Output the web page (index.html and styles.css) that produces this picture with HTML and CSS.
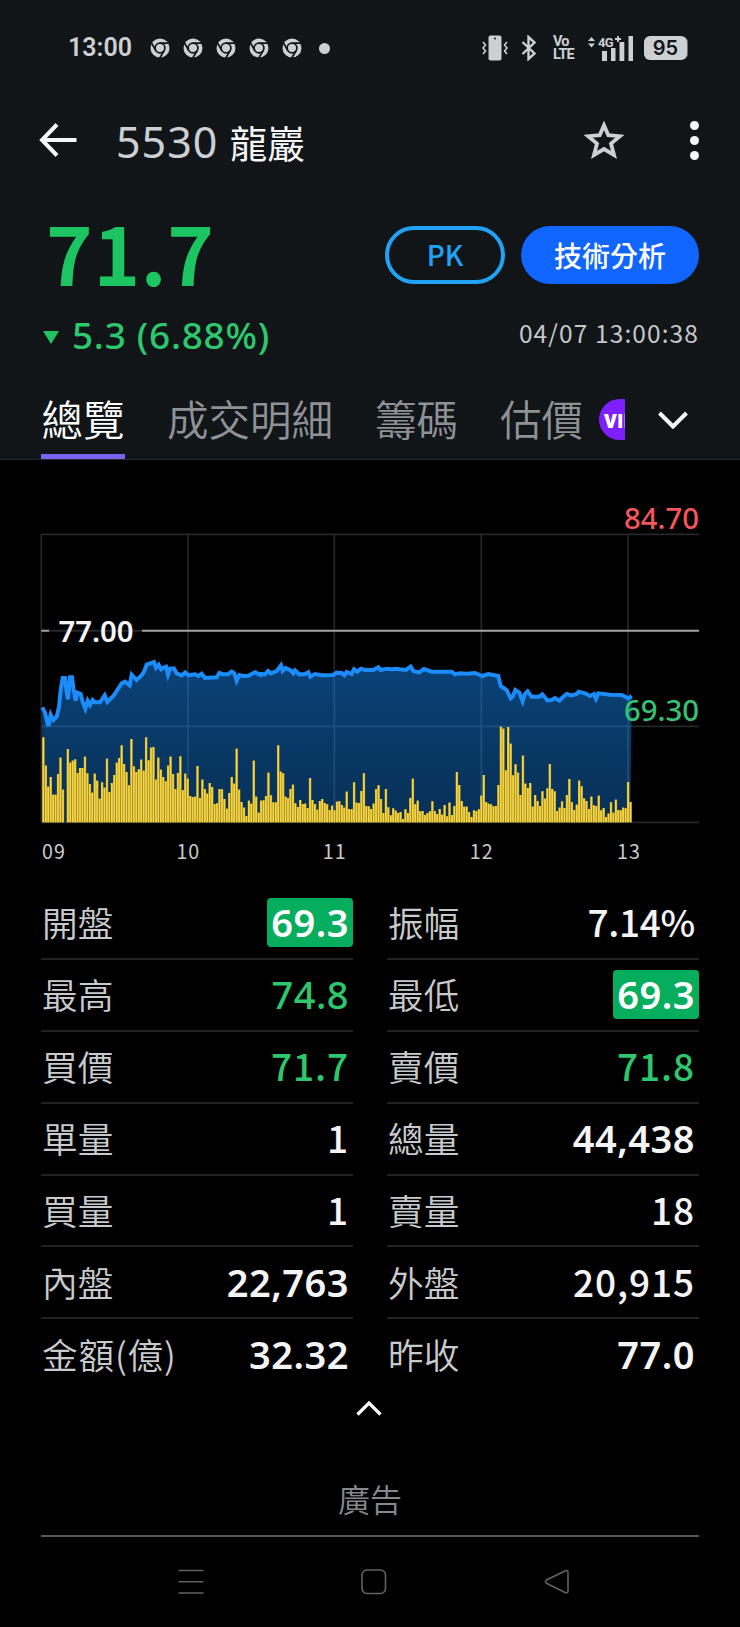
FILE: index.html
```html
<!DOCTYPE html>
<html lang="zh-Hant">
<head>
	<meta charset="utf-8">
	<title>5530 龍巖</title>
	<link rel="stylesheet" href="styles.css">
</head>
<body>
<svg class="defs">
	<symbol id="chrome" viewBox="0 0 20 20">
		<circle cx="10" cy="10" r="9.5" fill="#ccd0d2"/>
		<circle cx="10" cy="10" r="4.9" fill="none" stroke="#111518" stroke-width="1.7"/>
		<path d="M10 5.1H19M5.8 12.5L1.3 4.7M14.2 12.5L9.7 20.2" stroke="#111518" stroke-width="1.7"/>
	</symbol>
</svg>

<div class="top">
	<div class="status">
		<span class="clock">13:00</span>
		<div class="notis">
			<svg><use href="#chrome"/></svg>
			<svg><use href="#chrome"/></svg>
			<svg><use href="#chrome"/></svg>
			<svg><use href="#chrome"/></svg>
			<svg><use href="#chrome"/></svg>
			<i class="dot"></i>
		</div>
		<svg class="vibrate" width="26" height="26" viewBox="0 0 26 26">
			<rect x="6.5" y="0.5" width="13" height="25" rx="2" fill="#ccd0d2"/>
			<circle cx="13" cy="3.4" r="1" fill="#111518"/>
			<path d="M1 7l2.5 3-2.5 3 2.5 3-2.5 3M25 7l-2.5 3 2.5 3-2.5 3 2.5 3" fill="none" stroke="#ccd0d2" stroke-width="1.6"/>
		</svg>
		<svg class="bt" width="16" height="26" viewBox="0 0 16 26">
			<path d="M1.5 7L13.5 18.5 7.5 24V2L13.5 7.5 1.5 19" fill="none" stroke="#ccd0d2" stroke-width="2.4"/>
		</svg>
		<div class="volte"><span>Vo</span><span>LTE</span></div>
		<svg class="signal" width="48" height="28" viewBox="0 0 48 28">
			<path d="M1 7l3.500-4 3.500 4zM1 9.500l3.500 4 3.500-4z" fill="#ccd0d2"/>
			<text x="11" y="12.500" class="net">4G</text>
			<path d="M28 5h6M31 2v6" stroke="#ccd0d2" stroke-width="1.800"/>
			<path d="M15 17h5v10h-5zM24 14h4.500v13H24zM32.500 8h4.800v19h-4.800zM41.500 2H46v25h-4.500z" fill="#ccd0d2"/>
		</svg>
		<span class="battery">95</span>
	</div>

	<div class="titlebar">
		<svg class="back" width="38" height="34" viewBox="0 0 38 34">
			<path d="M37.500 17H3M18 1.500L3 17 18 32.500" fill="none" stroke="#f4f6f8" stroke-width="4"/>
		</svg>
		<h1><span>5530</span> 龍巖</h1>
		<svg class="star" width="40" height="40" viewBox="0 0 40 40">
			<path d="M20 5.200L24.300 15.200 35.800 16.200 27 23.600 30 35 20 29 10 35 13 23.600 4.200 16.200 15.700 15.200z" fill="none" stroke="#ccd0d4" stroke-width="3.800"/>
		</svg>
		<div class="more"><i></i><i></i><i></i></div>
	</div>

	<div class="quote">
		<div class="price">71.7</div>
		<div class="btns">
			<span class="btn pk">PK</span>
			<span class="btn tech">技術分析</span>
		</div>
	</div>
	<div class="change">
		<i class="down"></i>
		<span class="diff">5.3 (6.88%)</span>
		<span class="time">04/07 13:00:38</span>
	</div>

	<div class="tabs">
		<div class="tablist">
			<span class="tab on">總覽</span>
			<span class="tab">成交明細</span>
			<span class="tab">籌碼</span>
			<span class="tab">估價</span>
			<span class="vip">VIP</span>
		</div>
		<svg class="chev" width="30" height="18" viewBox="0 0 30 18">
			<path d="M1.500 2L15 15.500 28.500 2" fill="none" stroke="#f4f6f8" stroke-width="4"/>
		</svg>
	</div>
</div>

<!-- 3 chart units = 1px -->
<svg class="chart" width="670" height="425" viewBox="30 -90 2010 1275">
	<defs>
		<linearGradient id="blue" x1="0" y1="0" x2="0" y2="1">
			<stop offset="0" stop-color="#1484ee" stop-opacity=".5"/>
			<stop offset="1" stop-color="#1484ee" stop-opacity=".36"/>
		</linearGradient>
	</defs>
	<path class="grid" d="M34 133H2007M34 709H2007M34 997H2007M34 133V997M474 133V997M913 133V997M1354 133V997M1794 133V997"/>
	<path class="mid" d="M34 422H58M336 422H2007"/>
	<path class="midgap" d="M58 422H336"/>
	<polygon id="area" fill="url(#blue)"/>
	<g id="bars"></g>
	<polyline id="line"/>
	<text class="lbl red" x="2007" y="116">84.70</text>
	<text class="lbl green" x="2007" y="692">69.30</text>
	<text class="lbl white" x="311" y="456">77.00</text>
	<text class="hr" x="72" y="1106">09</text>
	<text class="hr" x="475" y="1106">10</text>
	<text class="hr" x="914" y="1106">11</text>
	<text class="hr" x="1355" y="1106">12</text>
	<text class="hr" x="1797" y="1106">13</text>
</svg>

<div class="grid2">
	<div class="row"><label>開盤</label><b class="box">69.3</b></div>
	<div class="row"><label>振幅</label><b class="c pct">7.14%</b></div>
	<div class="row"><label>最高</label><b class="g">74.8</b></div>
	<div class="row"><label>最低</label><b class="box">69.3</b></div>
	<div class="row"><label>買價</label><b class="c g">71.7</b></div>
	<div class="row"><label>賣價</label><b class="c g">71.8</b></div>
	<div class="row"><label>單量</label><b class="c">1</b></div>
	<div class="row"><label>總量</label><b>44,438</b></div>
	<div class="row"><label>買量</label><b class="c">1</b></div>
	<div class="row"><label>賣量</label><b class="c">18</b></div>
	<div class="row"><label>內盤</label><b>22,763</b></div>
	<div class="row"><label>外盤</label><b class="c">20,915</b></div>
	<div class="row last"><label class="wide">金額(億)</label><b>32.32</b></div>
	<div class="row last"><label>昨收</label><b>77.0</b></div>
</div>

<svg class="up" width="26" height="16" viewBox="0 0 26 16">
	<path d="M1.500 14.500L13 3 24.500 14.500" fill="none" stroke="#fff" stroke-width="3.200"/>
</svg>
<div class="ad">廣告</div>

<div class="nav">
	<svg width="26" height="26" viewBox="0 0 26 26"><path d="M0.500 1.500H25.500M0.500 12.800H25.500M0.500 24H25.500"/></svg>
	<svg width="26" height="26" viewBox="0 0 26 26"><rect x="1" y="1" width="23.500" height="23.500" rx="5"/></svg>
	<svg width="26" height="26" viewBox="0 0 26 26"><path d="M21.500 1.700L2.500 11Q0.500 12.700 2.500 14.200L21.500 23.700Q24 24.300 24 22V3.400Q24 1 21.500 1.700z"/></svg>
</div>

<script src="chart.js"></script>
</body>
</html>
```
FILE: styles.css
```css
body{
	margin: 0;
	width: 740px;
	height: 1627px;
	overflow: hidden;
	background: #000;
	color: #f4f4f6;
	font-family: "Noto Sans CJK TC", "Noto Sans", sans-serif;
}
.defs{
	position: absolute;
	width: 0;
	height: 0;
}
svg{
	display: block;
	flex: none;
}

/* header */
.top{
	height: 459px;
	background: #111518;
	border-bottom: 1px solid #26292c;
}
.status{
	display: flex;
	align-items: center;
	box-sizing: border-box;
	height: 96px;
	padding-left: 68px;
}
.clock{
	width: 82px;
	font: 600 25px/30px Roboto, sans-serif;
	color: #ccd0d2;
}
.notis{
	display: flex;
	align-items: center;
	gap: 13px;
	width: 332px;
}
.notis svg{
	width: 20px;
	height: 20px;
}
.dot{
	width: 11px;
	height: 11px;
	margin-left: 4px;
	border-radius: 50%;
	background: #ccd0d2;
}
.bt{
	margin-left: 13px;
}
.volte{
	width: 24px;
	margin-left: 16px;
	font: 700 14.5px/13px Roboto, sans-serif;
	letter-spacing: -0.8px;
	color: #ccd0d2;
}
.volte span{
	display: block;
}
.signal{
	margin: -1px 0 0 10px;
}
.net{
	font: 700 13px Roboto, sans-serif;
	letter-spacing: -0.6px;
	fill: #ccd0d2;
}
.battery{
	width: 43px;
	height: 24px;
	margin-left: 9px;
	border-radius: 6px;
	background: #ccd0d2;
	color: #111518;
	font: 600 20px/24px Inter, sans-serif;
	text-align: center;
	box-shadow: 2px 0 0 -1px #6a6e70;
}
.titlebar{
	display: flex;
	align-items: center;
	height: 88px;
	padding: 0 41px 0 39px;
}
h1{
	flex: 1;
	margin: 3px 0 0 39px;
	font-size: 37.5px;
	font-weight: 400;
	line-height: 60px;
	word-spacing: 3px;
	color: #f4f6f8;
}
h1 span{
	font-family: "Noto Sans", sans-serif;
	font-size: 43px;
	letter-spacing: 1px;
	color: #ccd0d4;
}
.more{
	display: flex;
	flex-direction: column;
	gap: 6px;
	margin-left: 66px;
}
.more i{
	width: 9px;
	height: 9px;
	border-radius: 50%;
	background: #f4f6f8;
}
.quote{
	display: flex;
	justify-content: space-between;
	height: 124px;
	padding: 0 41px 0 46px;
}
.price{
	font-size: 79px;
	font-weight: 700;
	line-height: 135px;
	letter-spacing: 0.8px;
	color: #1cc562;
}
.btns{
	display: flex;
	gap: 16px;
	padding-top: 42px;
}
.btn{
	box-sizing: border-box;
	height: 58px;
	border-radius: 29px;
	font-size: 28px;
	font-weight: 500;
	line-height: 58px;
	text-align: center;
}
.pk{
	width: 120px;
	border: 4px solid #21a2f5;
	color: #21a2f5;
	line-height: 48px;
}
.tech{
	width: 178px;
	background: #1066fe;
	color: #fff;
}
.change{
	display: flex;
	align-items: center;
	height: 54px;
	padding: 0 41px 2px 43px;
}
.down{
	margin: 5px 13px 0 0;
	border: 8px solid transparent;
	border-top: 13px solid #1cc562;
	border-bottom: 0;
}
.diff{
	flex: 1;
	font: 500 37px/54px "Noto Sans", sans-serif;
	letter-spacing: 0.7px;
	color: #2dc76d;
}
.time{
	margin-top: -6px;
	font-size: 24.5px;
	letter-spacing: 1.1px;
	color: #c4c7ca;
}
.tabs{
	display: flex;
	align-items: center;
	height: 95px;
	padding-left: 41px;
}
.tablist{
	display: flex;
	align-items: center;
	gap: 42px;
	width: 584px;
	height: 95px;
	overflow: hidden;
}
.tab{
	flex: none;
	box-sizing: border-box;
	height: 95px;
	border-bottom: 5px solid transparent;
	font-size: 41.5px;
	font-weight: 350;
	line-height: 109px;
	color: #8e9297;
}
.tab.on{
	width: 84px;
	text-indent: 0.5px;
	color: #fff;
	border-color: #7864ee;
}
.vip{
	flex: none;
	box-sizing: border-box;
	width: 60px;
	height: 41px;
	margin: 15px 0 0 -26px;
	padding-left: 5px;
	border-radius: 21px;
	background: #7d20fb;
	color: #fff;
	font: 800 18.5px/44px "Open Sans", sans-serif;
}
.chev{
	margin: 16px 0 0 33px;
}

/* chart */
.chart{
	margin-left: 40px;
}
.grid{
	fill: none;
	stroke: #25272b;
	stroke-width: 5;
}
.mid, .midgap{
	stroke: #a3a3a6;
	stroke-width: 6;
}
.midgap{
	stroke: #25272b;
}
#line{
	fill: none;
	stroke: #1b8cfa;
	stroke-width: 12;
}
.lbl{
	font: 500 88px "Noto Sans", sans-serif;
	text-anchor: end;
}
.red{ fill: #f5565f; }
.green{ fill: #35c274; }
.white{
	font-weight: 600;
	fill: #f4f4f6;
}
.hr{
	font-size: 59px;
	letter-spacing: 3px;
	text-anchor: middle;
	fill: #c8cacc;
}

/* numbers */
.grid2{
	display: grid;
	grid-template-columns: 312px 312px;
	column-gap: 34px;
	margin: 3px 0 0 41px;
}
.row{
	display: flex;
	align-items: center;
	justify-content: space-between;
	box-sizing: border-box;
	height: 71.9px;
	border-bottom: 2px solid #202224;
}
.row.last{
	border-color: transparent;
}
label{
	padding: 0 0 2px 1px;
	font-size: 35.7px;
	font-weight: 350;
	color: #c8cbcd;
}
.wide{
	letter-spacing: 0.8px;
}
b{
	padding: 0 4px;
	border-radius: 4px;
	font-family: "Noto Sans", sans-serif;
	font-size: 38px;
	font-weight: 600;
	line-height: 49px;
	letter-spacing: 0.5px;
}
/* footed 1 */
.c{
	padding-bottom: 2px;
	font-family: "Noto Sans CJK TC", sans-serif;
	font-size: 37px;
	font-weight: 500;
	letter-spacing: 0.9px;
}
.pct{
	letter-spacing: -0.3px;
}
.g{
	font-weight: 500;
	color: #2dc76d;
}
.box{
	background: #05ad5c;
	color: #fff;
}
.up{
	margin: 9px auto 0 356px;
}
.ad{
	box-sizing: border-box;
	height: 121px;
	margin: 0 41px;
	padding-top: 58px;
	border-bottom: 2px solid #55585a;
	font-size: 32px;
	font-weight: 350;
	line-height: 48px;
	text-align: center;
	color: #85898c;
}
.nav{
	display: flex;
	gap: 157px;
	padding: 32px 0 0 178px;
}
.nav svg{
	fill: none;
	stroke: #606366;
	stroke-width: 1.6;
}
```
FILE: chart.js
```js
// volume bar tops, one per minute, 997 is the base line
var tops = [742,827,890,861,914,914,852,803,899,997,777,818,812,808,849,834,834,800,850,882,
908,851,872,926,877,893,806,906,879,855,818,804,766,822,846,886,747,829,846,838,
809,842,742,811,773,771,869,803,839,861,874,827,800,852,897,849,799,900,851,866,
918,921,920,828,924,869,897,911,879,891,942,940,897,898,927,956,909,861,881,776,
899,936,953,978,932,941,812,920,968,932,931,918,848,916,937,937,766,845,850,920,
924,897,884,940,951,930,942,941,954,864,930,942,959,933,927,939,943,960,947,961,
935,934,945,953,905,957,958,877,938,939,903,850,948,949,957,941,897,886,927,969,
897,952,976,955,962,969,966,987,958,969,924,866,943,932,964,963,975,969,964,934,
963,972,957,974,945,979,938,975,948,846,885,933,950,950,966,981,961,963,958,917,
855,936,941,943,949,948,885,710,716,841,711,761,856,823,848,915,797,881,894,879,
950,915,933,948,904,926,895,822,897,904,963,953,934,954,915,867,936,960,944,872,
889,925,933,957,920,946,948,917,961,954,981,971,937,968,929,960,961,953,955,876,936];

// price line, in three stretches, x counted from each stretch's own left edge
var parts = [
[[37,652],[45,668],[55,708],[62,674],[70,690],[80,680],[87,650],[92,600],[98,564],[105,564],[109,600],[114,628],[120,562],[126,562],[131,600],[137,632],[142,608],[152,612],[158,636],[166,656],[173,632],[180,645],[188,630],[195,637],[210,637],[224,616],[232,636],[250,618],[262,600],[275,580],[285,575],[299,586],[305,554],[320,570],[335,556],[342,545],[350,524],[372,516],[378,533],[386,524],[393,538],[400,533],[408,530],[414,554],[420,536],[432,535],[440,550],[455,556],[466,547],[475,556],[495,553],[505,558],[515,551],[525,564],[560,562],[568,549],[580,553],[595,552],[605,545],[613,550],[620,572],[628,555],[640,558],[655,557],[675,547],[690,554],[705,552]],
[[54,543],[62,550],[80,543],[93,526],[98,543],[107,534],[122,541],[130,550],[135,541],[148,553],[165,552],[175,547],[181,560],[195,552],[215,556],[250,555],[260,548],[275,549],[283,556],[290,546],[305,552],[312,538],[322,545],[333,536],[345,540],[370,540],[385,532],[392,540],[410,536],[425,538],[440,536],[450,538],[468,540],[482,530],[490,543],[508,547],[522,537],[545,545],[605,545],[615,553],[630,550],[650,551],[675,549],[697,558]],
[[55,552],[85,558],[92,588],[110,600],[122,625],[128,620],[136,600],[148,608],[158,634],[165,612],[173,604],[185,620],[208,620],[217,613],[232,631],[245,630],[255,624],[268,632],[280,620],[290,612],[305,616],[320,612],[326,605],[345,610],[360,618],[372,612],[378,626],[385,610],[420,614],[455,615],[475,625],[485,618]]
];
// early part of the second stretch
parts[1] = [[12,547],[30,552],[45,553]].concat(parts[1]);
parts[0].pop();

var pts = parts.map((part,n) => part.map(p => (p[0]+n*660)+","+p[1]).join(" ")).join(" ");
// drop points that run back to the left where stretches meet
var lastX = 0;
pts = pts.split(" ").filter(p => {
	let x = parseFloat(p);
	if(x < lastX) return false;
	lastX = x;
	return true;
}).join(" ");

document.getElementById("line").setAttribute("points", pts);
document.getElementById("area").setAttribute("points", "37,997 " + pts + " 1801,997");

var html = "";
tops.forEach((t,i) => {
	let x = 36.5 + i*7.34;
	html += `<rect x="${x}" y="${t}" width="7.34" height="${997-t}" fill="#c09c1c"/>`;
	html += `<rect x="${x+1}" y="${t}" width="4.8" height="${997-t}" fill="#f4d648"/>`;
});
document.getElementById("bars").innerHTML = html;
```
